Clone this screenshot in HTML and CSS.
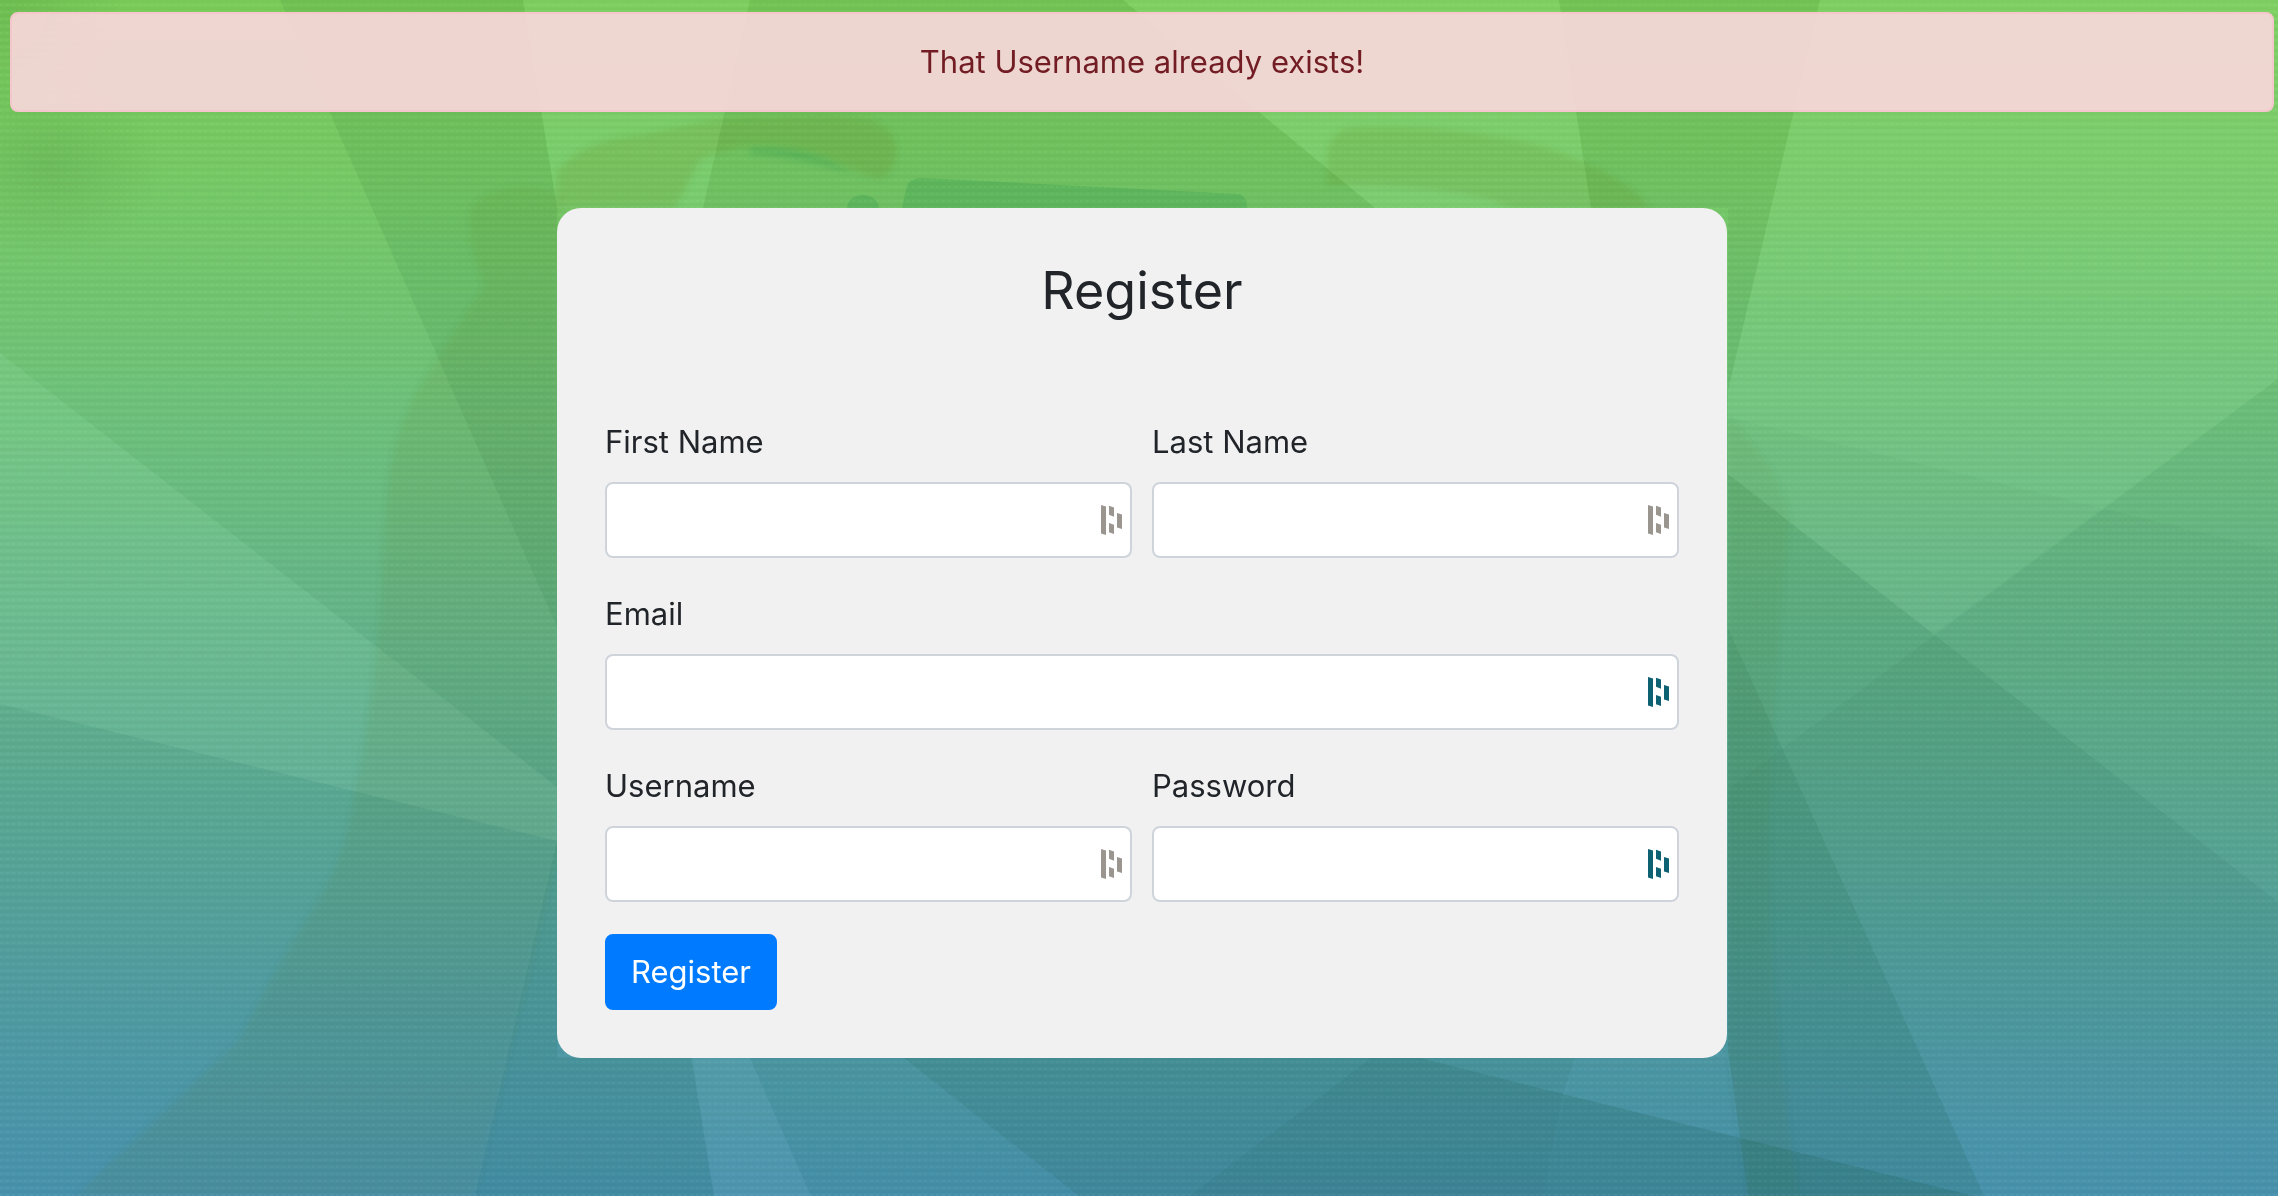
FILE: index.html
```html
<!DOCTYPE html>
<html lang="en">
<head>
<meta charset="utf-8">
<meta name="viewport" content="width=device-width, initial-scale=1">
<title>Register</title>
<link rel="stylesheet" href="styles.css">
</head>
<body class="page">
<svg class="backdrop" viewBox="0 0 2278 1196" preserveAspectRatio="none" aria-hidden="true">
  <defs>
    <linearGradient id="base" x1="0" y1="0" x2="0" y2="1">
      <stop offset="0" stop-color="#7acd59"/>
      <stop offset=".17" stop-color="#76c968"/>
      <stop offset=".33" stop-color="#6fc27a"/>
      <stop offset=".5" stop-color="#66b688"/>
      <stop offset=".67" stop-color="#5aa893"/>
      <stop offset=".83" stop-color="#509ca1"/>
      <stop offset="1" stop-color="#4892ad"/>
    </linearGradient>
    <linearGradient id="fade" gradientUnits="userSpaceOnUse" x1="0" y1="650" x2="0" y2="1150">
      <stop offset="0" stop-color="#00401c"/>
      <stop offset="1" stop-color="#00401c" stop-opacity="0"/>
    </linearGradient>
    <radialGradient id="smudge">
      <stop offset="0" stop-color="#4f9440" stop-opacity=".24"/>
      <stop offset="1" stop-color="#4f9440" stop-opacity="0"/>
    </radialGradient>
    <pattern id="weave" width="6" height="7" patternUnits="userSpaceOnUse">
      <rect width="6" height="3" fill="#000" opacity=".025"/>
      <rect y="4" width="3" height="2" fill="#fff" opacity=".04"/>
    </pattern>
    <filter id="soft"><feGaussianBlur stdDeviation="3"/></filter>
  </defs>
  <rect width="2278" height="1196" fill="url(#base)"/>
  <g fill="#b8ffd0">
    <path opacity=".08" d="M523 0H750L703 208H557Z"/>
    <path opacity=".1" d="M1123 0H1559L1591 208H1375Z"/>
    <path opacity=".09" d="M1820 0H2278V379L1933 634L1728 474V390Z"/>
    <path opacity=".05" d="M1933 634L2278 379V902Z"/>
    <path opacity=".11" d="M0 353L557 787V841L0 704Z"/>
  </g>
  <g fill="#c8f0ff">
    <path opacity=".05" d="M691 1058H750L811 1196H714Z"/>
  </g>
  <g fill="#00401c">
    <path opacity=".07" d="M280 0H523L557 208V627Z"/>
    <path opacity=".05" d="M750 0H1123L1375 208H703Z"/>
    <path opacity=".05" d="M1559 0H1820L1728 390V208H1591Z"/>
    <path opacity=".03" fill="url(#fade)" d="M1728 417L2278 551V1196H1984L1728 628Z"/>
    <path opacity=".05" fill="url(#fade)" d="M2278 379L1728 789V1196H2278Z"/>
    <path opacity=".05" fill="url(#fade)" d="M1728 474L2278 902V1196H1728Z"/>
    <path opacity=".1" d="M1728 628L1984 1196H1748L1728 1050Z"/>
    <path opacity=".07" d="M557 841L475 1196H714L692 1058H557Z"/>
    <path opacity=".03" d="M750 1058H904L1079 1196H811Z"/>
    <path opacity=".11" d="M904 1058H1371L1190 1196H1079Z"/>
    <path opacity=".16" d="M1371 1058H1420L1563 1094L1543 1196H1190Z"/>
    <path opacity=".07" d="M1420 1058H1575L1563 1094Z"/>
    <path opacity=".12" d="M1563 1094L1974 1196H1543Z"/>
    <path opacity=".02" d="M1575 1058H1727L1748 1196H1543Z"/>
  </g>
  <g fill="#5d6a20" filter="url(#soft)">
    <path opacity=".08" d="M470 214C475 190 530 176 560 196V841L475 1196H75L240 1040C290 930 340 890 352 810C365 740 378 660 380 600C386 520 385 470 400 430C412 390 450 340 484 286C474 260 468 240 470 214Z"/>
    <path opacity=".13" d="M557 172C575 150 600 142 620 138C670 132 700 118 740 118C790 118 840 112 870 120C905 130 902 165 882 178C850 175 830 150 770 146C730 145 710 155 700 160L675 208H557Z"/>
    <path opacity=".12" d="M1328 185C1325 155 1325 132 1350 128C1420 124 1500 132 1560 152C1600 168 1635 186 1650 208H1510C1480 190 1400 185 1328 185Z"/>
    <path opacity=".06" d="M1728 417C1760 450 1785 480 1790 520C1780 600 1775 700 1770 790C1765 900 1775 1050 1800 1196H1748L1728 1050Z"/>
  </g>
  <g fill="#22914a">
    <path opacity=".25" filter="url(#soft)" d="M750 148C800 145 830 158 850 174C820 162 790 158 750 154Z"/>
    <path opacity=".22" d="M902 208L907 186Q910 178 922 178L1238 194Q1247 195 1247 208Z"/>
    <path opacity=".22" d="M847 208A16 13 0 0 1 879 208Z"/>
  </g>
  <ellipse cx="50" cy="165" rx="110" ry="90" fill="url(#smudge)"/>
  <ellipse cx="10" cy="10" rx="110" ry="120" fill="url(#smudge)"/>
  <rect width="2278" height="1196" fill="url(#weave)"/>
</svg>

<div class="alert" role="alert">That Username already exists!</div>

<main class="card">
  <h1 class="card-title">Register</h1>
  <form class="form">
    <div class="field">
      <label for="first-name">First Name</label>
      <div class="control">
        <input id="first-name" type="text">
        <svg class="fill-icon" viewBox="0 0 21 30" aria-hidden="true"><path d="M0 0L5 1.5V30L0 28.5ZM8 .7L13 2.5V11.7L8 9.7ZM8 18L13 19.7V29L8 27.3ZM16 8L21 9.5V24L16 22.5Z"/></svg>
      </div>
    </div>
    <div class="field">
      <label for="last-name">Last Name</label>
      <div class="control">
        <input id="last-name" type="text">
        <svg class="fill-icon" viewBox="0 0 21 30" aria-hidden="true"><path d="M0 0L5 1.5V30L0 28.5ZM8 .7L13 2.5V11.7L8 9.7ZM8 18L13 19.7V29L8 27.3ZM16 8L21 9.5V24L16 22.5Z"/></svg>
      </div>
    </div>
    <div class="field field-wide">
      <label for="email">Email</label>
      <div class="control">
        <input id="email" type="email">
        <svg class="fill-icon fill-icon-active" viewBox="0 0 21 30" aria-hidden="true"><path d="M0 0L5 1.5V30L0 28.5ZM8 .7L13 2.5V11.7L8 9.7ZM8 18L13 19.7V29L8 27.3ZM16 8L21 9.5V24L16 22.5Z"/></svg>
      </div>
    </div>
    <div class="field">
      <label for="username">Username</label>
      <div class="control">
        <input id="username" type="text">
        <svg class="fill-icon" viewBox="0 0 21 30" aria-hidden="true"><path d="M0 0L5 1.5V30L0 28.5ZM8 .7L13 2.5V11.7L8 9.7ZM8 18L13 19.7V29L8 27.3ZM16 8L21 9.5V24L16 22.5Z"/></svg>
      </div>
    </div>
    <div class="field">
      <label for="password">Password</label>
      <div class="control">
        <input id="password" type="password">
        <svg class="fill-icon fill-icon-active" viewBox="0 0 21 30" aria-hidden="true"><path d="M0 0L5 1.5V30L0 28.5ZM8 .7L13 2.5V11.7L8 9.7ZM8 18L13 19.7V29L8 27.3ZM16 8L21 9.5V24L16 22.5Z"/></svg>
      </div>
    </div>
    <button class="submit" type="submit">Register</button>
  </form>
</main>
</body>
</html>
```
FILE: styles.css
```css
* {
  box-sizing: border-box;
}

.page {
  position: relative;
  min-height: 100vh;
  margin: 0;
  padding: 12px 4px 48px 10px;
  background: #58a592;
  color: #212529;
  font-family: Inter, "Liberation Sans", sans-serif;
  font-size: 31px;
  line-height: 48px;
}

.backdrop {
  position: absolute;
  inset: 0;
  z-index: -1;
  width: 100%;
  height: 100%;
}

.alert {
  padding: 24px;
  border: 2px solid #f5c6cb;
  border-radius: 8px;
  background: rgba(248, 215, 218, 0.92);
  color: #721c24;
  text-align: center;
}

.card {
  max-width: 1170px;
  margin: 96px auto 0;
  padding: 48px;
  border-radius: 24px;
  background: #f1f1f1;
}

.card-title {
  margin: 0 0 92px;
  font-size: 52px;
  font-weight: 400;
  line-height: 70px;
  text-align: center;
}

.form {
  display: grid;
  grid-template-columns: 1fr 1fr;
  gap: 32px 20px;
}

.field {
  display: flex;
  flex-direction: column;
  gap: 16px;
}

.field-wide {
  grid-column: 1 / -1;
}

.control {
  position: relative;
}

.control input {
  display: block;
  width: 100%;
  height: 76px;
  padding: 12px 48px 12px 24px;
  border: 2px solid #ced4da;
  border-radius: 8px;
  background: #fff;
  color: #495057;
  font: inherit;
}

.fill-icon {
  position: absolute;
  top: 23px;
  right: 10px;
  width: 21px;
  height: 30px;
  fill: #9b9590;
}

.fill-icon-active {
  fill: #0e6073;
}

.submit {
  justify-self: start;
  padding: 12px 24px;
  border: 2px solid #007bff;
  border-radius: 8px;
  background: #007bff;
  color: #fff;
  font: inherit;
  cursor: pointer;
}
```
